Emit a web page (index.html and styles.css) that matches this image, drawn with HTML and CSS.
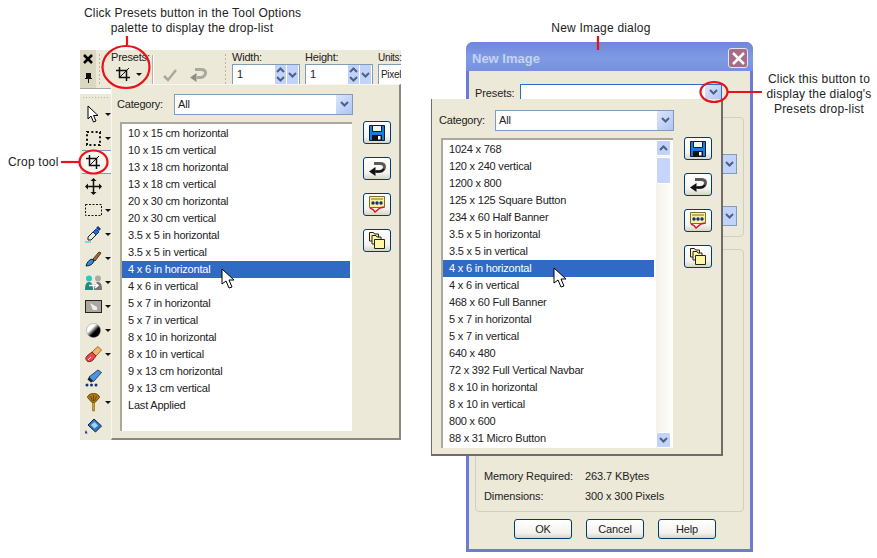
FILE: index.html
```html
<!DOCTYPE html>
<html lang="en">
<head>
    <meta charset="UTF-8">
    <title>Presets drop-list</title>
    <link rel="stylesheet" href="styles.css">
</head>
<body>

<svg class="defs" width="0" height="0">
    <symbol id="ico-save" viewBox="0 0 16 16">
        <path d="M.5.500h15v15H.5z" fill="#1a7ae0" stroke="#0a1a40"/>
        <path d="M3.500.500h9v6h-9z" fill="#f4f4ec" stroke="#0a1a40"/>
        <path d="M3 10h10v5.500H3z" fill="#111"/>
        <path d="M9 11h2.500v3.500H9z" fill="#fff"/>
    </symbol>
    <symbol id="ico-undo" viewBox="0 0 18 16">
        <path d="M6 2.500h6c3 0 4.500 1.500 4.500 3.500s-2 4.500-5 4.500H8" fill="none" stroke="#5a5a5a" stroke-width="3"/>
        <path d="M1 10.500l6.500-4.500v9z" fill="#111"/>
        <path d="M7 10.500h4.500c2 0 3.500-1 4.500-2.500" fill="none" stroke="#111" stroke-width="2"/>
    </symbol>
    <symbol id="ico-manage" viewBox="0 0 18 17">
        <path d="M1.500.500h15v11h-15z" fill="#f6efa6" stroke="#7a7420"/>
        <path d="M3 3h12" stroke="#7a7420"/>
        <circle cx="5" cy="7" r="1.700" fill="#1c2c70"/>
        <circle cx="9" cy="7" r="1.700" fill="#1c2c70"/>
        <circle cx="13" cy="7" r="1.700" fill="#1c2c70"/>
        <path d="M2 12l3 1.500 2 2.500 5-4 4-1" fill="none" stroke="#e01818" stroke-width="1.500"/>
    </symbol>
    <symbol id="ico-folders" viewBox="0 0 16 17">
        <path d="M.5.500h4l1 1.500h4v7H.5z" fill="#fff6a8" stroke="#222"/>
        <path d="M3 3.500h4l1 1.500h4v7H3z" fill="#fff6a8" stroke="#222"/>
        <path d="M5.500 7.500h10v9h-10z" fill="#fff6a8" stroke="#222"/>
    </symbol>
    <symbol id="ico-crop" viewBox="0 0 14 14">
        <path d="M3.500 0v10.500H14M0 3.500h10.500V14" fill="none" stroke="#111" stroke-width="1.500"/>
        <path d="M3 11L13 1" stroke="#111"/>
    </symbol>
    <symbol id="ico-chev" viewBox="0 0 9 7">
        <path d="M1 1l3.500 3.500L8 1" fill="none" stroke="#4d6185" stroke-width="2"/>
    </symbol>
    <symbol id="ico-chev-up" viewBox="0 0 9 7">
        <path d="M1 5l3.500-3.500L8 5" fill="none" stroke="#4d6185" stroke-width="2"/>
    </symbol>
    <symbol id="ico-cursor" viewBox="0 0 13 21">
        <path d="M1 1v15l4-3 3 7 3-1-3-7h5z" fill="#fff" stroke="#000"/>
    </symbol>
</svg>

<!-- note labels -->
<p class="note note-presets">Click Presets button in the Tool Options<br>palette to display the drop-list</p>
<p class="note note-crop">Crop tool</p>
<p class="note note-dialog">New Image dialog</p>
<p class="note note-button">Click this button to<br>display the dialog's<br>Presets drop-list</p>

<!-- left: tool options palette + tools toolbar -->
<div class="palette">
    <div class="options">
        <div class="pin-col">
            <svg width="10" height="10" viewBox="0 0 10 10"><path d="M1 1l8 8M9 1L1 9" stroke="#000" stroke-width="2.500"/></svg>
            <svg width="9" height="12" viewBox="0 0 9 12"><path d="M2 1h5v5h1v1H1V6h1zM4 7h1v4H4z" fill="#111"/></svg>
        </div>
        <div class="grip"></div>
        <div class="opt-presets">
            <span>Presets:</span>
            <div class="opt-presets-btn">
                <svg width="14" height="14"><use href="#ico-crop"/></svg>
                <i class="caret"></i>
            </div>
        </div>
        <div class="opt-sep"></div>
        <div class="opt-apply">
            <svg width="16" height="14" viewBox="0 0 16 14"><path d="M2 8l4 4 8-10" fill="none" stroke="#a9a89c" stroke-width="2.500"/></svg>
            <svg width="18" height="16" viewBox="0 0 18 16"><path d="M6 2.500h6c3 0 4.500 1.500 4.500 3.500s-2 4.500-5 4.500H8" fill="none" stroke="#a9a89c" stroke-width="3"/><path d="M1 10.500l6.500-4.500v9z" fill="#8d8d86"/></svg>
        </div>
        <div class="grip grip-2"></div>
        <div class="opt-field">
            <span>Width:</span>
            <div class="spin"><b>1</b><i class="spin-ud"><svg width="9" height="7"><use href="#ico-chev-up"/></svg><svg width="9" height="7"><use href="#ico-chev"/></svg></i><i class="spin-btn"><svg width="9" height="7"><use href="#ico-chev"/></svg></i></div>
        </div>
        <div class="opt-field">
            <span>Height:</span>
            <div class="spin"><b>1</b><i class="spin-ud"><svg width="9" height="7"><use href="#ico-chev-up"/></svg><svg width="9" height="7"><use href="#ico-chev"/></svg></i><i class="spin-btn"><svg width="9" height="7"><use href="#ico-chev"/></svg></i></div>
        </div>
        <div class="opt-field opt-units">
            <span>Units:</span>
            <div class="spin"><b>Pixel</b></div>
        </div>
    </div>

    <div class="tools">
        <div class="tools-grip"></div>
        <div class="tool"><svg width="15" height="18" viewBox="0 0 13 18"><path d="M1 1v13l3-3 2.500 6 2.500-1-2.500-5.500H11z" fill="#fff" stroke="#000"/></svg><i class="caret"></i></div>
        <div class="tool"><svg width="15" height="15" viewBox="0 0 15 15"><rect x="1" y="1" width="13" height="13" fill="none" stroke="#111" stroke-width="2" stroke-dasharray="2 2.330"/></svg><i class="caret"></i></div>
        <div class="tool tool-on"><svg width="14" height="14"><use href="#ico-crop"/></svg></div>
        <div class="tool"><svg width="17" height="17" viewBox="0 0 17 17"><path d="M8.500 1v15M1 8.500h15" stroke="#111" stroke-width="1.500"/><path d="M8.500 0l3 3h-6zM8.500 17l3-3h-6zM0 8.500l3-3v6zM17 8.500l-3-3v6z" fill="#111"/></svg></div>
        <div class="tool"><svg width="17" height="12" viewBox="0 0 17 12"><rect x=".5" y=".5" width="16" height="11" fill="#ece9d8" stroke="#111" stroke-dasharray="2 1.500"/></svg><i class="caret"></i></div>
        <div class="tool"><svg width="16" height="17" viewBox="0 0 16 17"><path d="M3 11l6-6 3 3-6 6H3z" fill="#ece9d8" stroke="#123"/><path d="M8 6l3-3 3 3-3 3z" fill="#1f6fd0" stroke="#123a88"/><path d="M11 2l2-2 3 3-2 2z" fill="#123a88"/><path d="M0 16h6" stroke="#22c8d0"/></svg><i class="caret"></i></div>
        <div class="tool"><svg width="17" height="17" viewBox="0 0 17 17"><path d="M1 16c1-4 3-6 6-7l2 2c-1 3-4 5-8 5z" fill="#2a8fd8" stroke="#123"/><path d="M8 9l6-7 2 1-6 8z" fill="#a86a30" stroke="#432"/></svg><i class="caret"></i></div>
        <div class="tool"><svg width="17" height="15" viewBox="0 0 17 15"><path d="M0 15c0-5 1-8 4-8s4 3 4 8z" fill="#1f8a80"/><circle cx="4" cy="3.500" r="3" fill="#2cc8c0"/><path d="M9 15c0-5 1-8 4-8s4 3 4 8z" fill="#777"/><circle cx="13" cy="3.500" r="3" fill="#aaa"/><path d="M4 10.500h9M10 8l3 2.500-3 2.500" fill="none" stroke="#fff" stroke-width="1.500"/></svg><i class="caret"></i></div>
        <div class="tool"><svg width="17" height="13" viewBox="0 0 17 13"><rect x=".5" y=".5" width="16" height="12" fill="#aaa89c" stroke="#222"/><path d="M5 3l7 4v3H8z" fill="#eee"/></svg><i class="caret"></i></div>
        <div class="tool"><svg width="15" height="15" viewBox="0 0 15 15"><defs><linearGradient id="gr-tone" x1="0" y1="0" x2="1" y2="1"><stop offset=".35" stop-color="#fff"/><stop offset=".6" stop-color="#000"/></linearGradient></defs><circle cx="7.500" cy="7.500" r="7" fill="url(#gr-tone)" stroke="#888" stroke-width=".5"/></svg><i class="caret"></i></div>
        <div class="tool"><svg width="17" height="17" viewBox="0 0 17 17"><path d="M7 6l6-5.500 3.500 3.500-5.500 6z" fill="#f0b860" stroke="#964"/><path d="M7 6l4 4-3 4c-2 2-5 2-6 1s-2-3 0-5z" fill="#e84848" stroke="#722"/><path d="M3 14l3-3" stroke="#fff"/></svg><i class="caret"></i></div>
        <div class="tool"><svg width="17" height="18" viewBox="0 0 17 18"><path d="M4 8l9-7 3.500 2.500-8 9z" fill="#4f94e0" stroke="#246"/><path d="M4 8l4 4.500-2 1-3.500-3z" fill="#222"/><g fill="#18307a"><circle cx="2" cy="16" r="1.500"/><circle cx="6.500" cy="16" r="1.500"/><circle cx="11" cy="16" r="1.500"/></g></svg></div>
        <div class="tool"><svg width="13" height="19" viewBox="0 0 13 19"><path d="M.5 4.500a6 4 0 0 1 12 0l-4.500 5H5z" fill="#b07a12" stroke="#6a4a08"/><path d="M3.500 3l2 5M6.500 2v6M9.500 3l-2 5" stroke="#6a4a08"/><path d="M5.500 9.500h2V18h-2z" fill="#d8a020" stroke="#6a4a08" stroke-width=".5"/></svg><i class="caret"></i></div>
        <div class="tool"><svg width="17" height="17" viewBox="0 0 17 17"><path d="M3 7l6-6 7.500 7-6 6z" fill="#2f78c8" stroke="#123"/><path d="M6 7l3.500-3 3.500 3.500-3.500 3z" fill="#a8d0f0"/><path d="M1 12l1.500 3.500h-3z" fill="#1a3a9a"/></svg></div>
    </div>

    <div class="panel panel-left">
        <div class="panel-main">
            <div class="cat-row">
                <span>Category:</span>
                <div class="select"><span>All</span><i class="drop-btn"><svg width="9" height="7"><use href="#ico-chev"/></svg></i></div>
            </div>
            <div class="list">
                <ul class="list-items">
                    <li>10 x 15 cm horizontal</li>
                    <li>10 x 15 cm vertical</li>
                    <li>13 x 18 cm horizontal</li>
                    <li>13 x 18 cm vertical</li>
                    <li>20 x 30 cm horizontal</li>
                    <li>20 x 30 cm vertical</li>
                    <li>3.5 x 5 in horizontal</li>
                    <li>3.5 x 5 in vertical</li>
                    <li class="on">4 x 6 in horizontal<svg class="cursor" width="13" height="21"><use href="#ico-cursor"/></svg></li>
                    <li>4 x 6 in vertical</li>
                    <li>5 x 7 in horizontal</li>
                    <li>5 x 7 in vertical</li>
                    <li>8 x 10 in horizontal</li>
                    <li>8 x 10 in vertical</li>
                    <li>9 x 13 cm horizontal</li>
                    <li>9 x 13 cm vertical</li>
                    <li>Last Applied</li>
                </ul>
            </div>
        </div>
        <div class="side-btns">
            <button class="xp-btn"><svg width="16" height="16"><use href="#ico-save"/></svg></button>
            <button class="xp-btn"><svg width="18" height="16"><use href="#ico-undo"/></svg></button>
            <button class="xp-btn"><svg width="18" height="17"><use href="#ico-manage"/></svg></button>
            <button class="xp-btn"><svg width="16" height="17"><use href="#ico-folders"/></svg></button>
        </div>
    </div>
</div>

<!-- right: new image dialog -->
<div class="dialog">
    <div class="dlg-title">
        <span>New Image</span>
        <div class="dlg-close"><svg width="13" height="13" viewBox="0 0 13 13"><path d="M1 1l11 11M12 1L1 12" stroke="#fff" stroke-width="2.500"/></svg></div>
    </div>
    <div class="dlg-body">
        <div class="dlg-presets">
            <span>Presets:</span>
            <div class="dlg-input"><i class="drop-btn"><svg width="9" height="7"><use href="#ico-chev"/></svg></i></div>
        </div>
        <div class="group group-top">
            <i class="stub"><svg width="9" height="7"><use href="#ico-chev"/></svg></i>
            <i class="stub"><svg width="9" height="7"><use href="#ico-chev"/></svg></i>
        </div>
        <div class="group group-info">
            <div class="info-row"><span>Memory Required:</span><span>263.7 KBytes</span></div>
            <div class="info-row"><span>Dimensions:</span><span>300 x 300 Pixels</span></div>
        </div>
        <div class="dlg-btns">
            <button class="xp-btn">OK</button>
            <button class="xp-btn">Cancel</button>
            <button class="xp-btn">Help</button>
        </div>
    </div>
</div>

<div class="panel panel-right">
    <div class="panel-main">
        <div class="cat-row">
            <span>Category:</span>
            <div class="select"><span>All</span><i class="drop-btn"><svg width="9" height="7"><use href="#ico-chev"/></svg></i></div>
        </div>
        <div class="list">
            <ul class="list-items">
                <li>1024 x 768</li>
                <li>120 x 240 vertical</li>
                <li>1200 x 800</li>
                <li>125 x 125 Square Button</li>
                <li>234 x 60 Half Banner</li>
                <li>3.5 x 5 in horizontal</li>
                <li>3.5 x 5 in vertical</li>
                <li class="on">4 x 6 in horizontal<svg class="cursor" width="13" height="21"><use href="#ico-cursor"/></svg></li>
                <li>4 x 6 in vertical</li>
                <li>468 x 60 Full Banner</li>
                <li>5 x 7 in horizontal</li>
                <li>5 x 7 in vertical</li>
                <li>640 x 480</li>
                <li>72 x 392 Full Vertical Navbar</li>
                <li>8 x 10 in horizontal</li>
                <li>8 x 10 in vertical</li>
                <li>800 x 600</li>
                <li>88 x 31 Micro Button</li>
            </ul>
            <div class="scroll">
                <i class="scroll-btn"><svg width="9" height="7"><use href="#ico-chev-up"/></svg></i>
                <i class="scroll-thumb"></i>
                <i class="scroll-btn scroll-down"><svg width="9" height="7"><use href="#ico-chev"/></svg></i>
            </div>
        </div>
    </div>
    <div class="side-btns">
        <button class="xp-btn"><svg width="16" height="16"><use href="#ico-save"/></svg></button>
        <button class="xp-btn"><svg width="18" height="16"><use href="#ico-undo"/></svg></button>
        <button class="xp-btn"><svg width="18" height="17"><use href="#ico-manage"/></svg></button>
        <button class="xp-btn"><svg width="16" height="17"><use href="#ico-folders"/></svg></button>
    </div>
</div>

<!-- red callouts over everything -->
<svg class="callouts" width="877" height="558" viewBox="0 0 877 558">
    <g fill="none" stroke="#e8121a" stroke-width="2.200">
        <ellipse cx="126" cy="67" rx="23.500" ry="21"/>
        <path d="M127 36v9"/>
        <ellipse cx="93.500" cy="162" rx="14" ry="11.500"/>
        <path d="M61 162h18"/>
        <ellipse cx="714" cy="92" rx="13.500" ry="10"/>
        <path d="M728 92h34"/>
        <path d="M598 36v14"/>
    </g>
</svg>

</body>
</html>
```

FILE: styles.css
```css
* {
    box-sizing: border-box;
}
html, body {
    margin: 0;
    padding: 0;
}
body {
    position: relative;
    width: 877px;
    height: 558px;
    overflow: hidden;
    background-color: #fff;
    font-family: "Liberation Sans", Arial, sans-serif;
    font-size: 12px;
    color: #222;
}
ul {
    list-style: none;
    margin: 0;
    padding: 0;
}
i {
    font-style: normal;
}
svg {
    display: block;
}
.defs {
    position: absolute;
}

/* notes */
.note {
    position: absolute;
    margin: 0;
    font-size: 12px;
    line-height: 15px;
    letter-spacing: .2px;
    text-align: center;
    white-space: nowrap;
}
.note-presets {
    left: 84px;
    top: 6px;
    width: 216px;
}
.note-crop {
    left: 8px;
    top: 155px;
}
.note-dialog {
    left: 551px;
    top: 21px;
    width: 100px;
}
.note-button {
    left: 765px;
    top: 72px;
    width: 108px;
}
.callouts {
    position: absolute;
    left: 0;
    top: 0;
}

/* left palette */
.palette {
    position: absolute;
    left: 80px;
    top: 50px;
    width: 321px;
    height: 390px;
    font-size: 11px;
    letter-spacing: -.2px;
}
.options {
    display: flex;
    height: 39px;
    background-color: #ece9d8;
    border-bottom: 1px solid #aca899;
}
.pin-col {
    width: 16px;
    display: flex;
    flex-direction: column;
    align-items: center;
    gap: 8px;
    padding-top: 4px;
    background-color: #dcd7c0;
}
.grip {
    width: 3px;
    height: 33px;
    margin: 3px 4px 0 2px;
    background-image: radial-gradient(#b8b5a4 1px, transparent 1px);
    background-size: 3px 4px;
}
.opt-presets {
    width: 47px;
    padding: 1px 0 0 6px;
}
.opt-presets > span {
    display: block;
    height: 13px;
    line-height: 13px;
}
.opt-presets-btn {
    display: flex;
    align-items: center;
    gap: 6px;
    margin: 3px 0 0 5px;
}
.opt-sep {
    width: 2px;
    height: 32px;
    margin-top: 5px;
    border-left: 1px solid #b5b2a2;
    border-right: 1px solid #fff;
}
.opt-apply {
    display: flex;
    align-items: center;
    gap: 11px;
    width: 70px;
    height: 38px;
    padding: 12px 0 0 8px;
}
.grip-2 {
    margin: 3px 5px 0 0;
}
.opt-field {
    width: 73px;
    padding-top: 1px;
}
.opt-field > span {
    display: block;
    height: 13px;
    line-height: 13px;
}
.opt-units {
    width: 23px;
    font-size: 10px;
    letter-spacing: -.3px;
}
.spin {
    display: flex;
    align-items: flex-start;
    width: 68px;
    height: 22px;
    overflow: hidden;
    background-color: #fff;
    border: 1px solid #7f9db9;
}
.opt-units .spin {
    width: 23px;
    border-right: 0;
}
.spin b {
    flex: 1;
    padding: 3px 0 0 4px;
    font-weight: normal;
    line-height: 13px;
}
.opt-units .spin b {
    padding-left: 2px;
}
.spin-ud,
.spin-btn {
    width: 11px;
    height: 20px;
    background-color: #c1d3fb;
    display: flex;
    flex-direction: column;
    align-items: center;
    justify-content: center;
}
.spin-ud {
    gap: 2px;
}
.spin-btn {
    margin-left: 1px;
    margin-right: 1px;
}

.tools {
    height: 346px;
    margin-top: 5px;
    width: 31px;
    background-color: #ece9d8;
}
.tools-grip {
    height: 8px;
    margin: 0 2px;
    background-image: radial-gradient(#b8b5a4 1px, transparent 1px);
    background-size: 3px 3px;
    background-repeat: repeat-x;
    background-position: 0 2px;
}
.tool {
    position: relative;
    height: 24px;
    display: flex;
    align-items: center;
    justify-content: center;
    padding-right: 5px;
}
.tool-on {
    background-color: #f7f6ef;
    border: 1px solid #7f9db9;
    border-width: 1px 0;
    margin-left: 2px;
    padding-right: 7px;
}
.caret {
    display: block;
    width: 0;
    height: 0;
    border: 3px solid transparent;
    border-top: 3px solid #111;
    border-bottom: 0;
}
.tool .caret {
    position: absolute;
    right: 0;
    top: 11px;
}

/* presets drop-list panels */
.panel {
    position: absolute;
    display: flex;
    background-color: #ece9d8;
    font-size: 11px;
    letter-spacing: -.2px;
}
.panel-left {
    left: 31px;
    top: 34px;
    width: 290px;
    height: 356px;
    padding: 0 9px 7px 6px;
    border-right: 2px solid #8a887c;
    border-bottom: 2px solid #8a887c;
    border-top: 1px solid #f7f6ef;
    border-left: 1px solid #f7f6ef;
}
.panel-right {
    left: 431px;
    top: 99px;
    width: 292px;
    height: 357px;
    padding: 0 8px 6px 9px;
    border: 1px solid #6f6e66;
    border-width: 0 2px 2px 1px;
}
.panel-main {
    width: 233px;
    display: flex;
    flex-direction: column;
}
.cat-row {
    display: flex;
    align-items: center;
    justify-content: space-between;
    width: 236px;
    height: 22px;
    margin-top: 10px;
}
.panel-left .cat-row {
    margin: 8px 0 0 -1px;
}
.panel-right .cat-row {
    width: 235px;
    margin-left: -2px;
}
.select {
    display: flex;
    align-items: center;
    justify-content: space-between;
    width: 179px;
    height: 21px;
    padding-left: 3px;
    background-color: #fff;
    border: 1px solid #7f9db9;
}
.drop-btn {
    width: 16px;
    height: 19px;
    display: flex;
    align-items: center;
    justify-content: center;
    background: linear-gradient(135deg, #dbe5fc, #afc4f4);
}
.list {
    display: flex;
    flex: 1;
    margin-top: 7px;
    background-color: #fff;
    border-top: 2px solid #aca899;
    border-left: 2px solid #aca899;
    overflow: hidden;
}
.panel-right .list {
    width: 232px;
}
.panel-left .list {
    margin-left: 2px;
    width: 232px;
}
.list-items {
    flex: 1;
    padding-top: 1px;
}
.list-items li {
    position: relative;
    height: 17px;
    line-height: 17px;
    padding-left: 6px;
    color: #222;
    white-space: nowrap;
}
.list-items li.on {
    background-color: #316ac5;
    color: #fff;
    margin-right: 2px;
}
.cursor {
    position: absolute;
    left: 99px;
    top: 7px;
    z-index: 2;
}
.panel-right .cursor {
    left: 110px;
}
.scroll {
    width: 17px;
    display: flex;
    flex-direction: column;
    background: linear-gradient(90deg, #f3f1e7, #fff);
}
.scroll-btn,
.scroll-thumb {
    display: flex;
    align-items: center;
    justify-content: center;
    width: 15px;
    background-color: #c1d3fb;
    border: 1px solid #fff;
    border-radius: 2px;
}
.scroll-btn {
    height: 16px;
}
.scroll-thumb {
    height: 27px;
    margin-top: 1px;
    background-color: #c5d5fb;
}
.scroll-down {
    margin-top: auto;
}
.side-btns {
    display: flex;
    flex-direction: column;
    gap: 13px;
}
.panel-left .side-btns {
    margin: 36px 0 0 12px;
}
.panel-right .side-btns {
    margin: 38px 0 0 10px;
}
.xp-btn {
    display: flex;
    align-items: center;
    justify-content: center;
    width: 28px;
    height: 23px;
    padding: 0;
    font-family: inherit;
    font-size: 11px;
    letter-spacing: inherit;
    color: #222;
    background: linear-gradient(#fff, #f4f3ee 70%, #d9d5c5);
    border: 1px solid #003c74;
    border-radius: 3px;
}

/* new image dialog */
.dialog {
    position: absolute;
    left: 466px;
    top: 42px;
    width: 287px;
    height: 510px;
    display: flex;
    flex-direction: column;
    font-size: 11px;
    letter-spacing: -.1px;
    background-color: #6c7bd8;
    border-radius: 7px 7px 0 0;
    padding: 0 3px 3px;
}
.dlg-title {
    display: flex;
    align-items: center;
    justify-content: space-between;
    height: 29px;
    margin: 0 -3px;
    padding: 3px 5px 0 6px;
    background: linear-gradient(#6f86dc, #7f9be4 55%, #7690e0);
    border-radius: 7px 7px 0 0;
    font-size: 13px;
    letter-spacing: 0;
    font-weight: bold;
    color: #c4d2f3;
}
.dlg-close {
    width: 20px;
    height: 20px;
    display: flex;
    align-items: center;
    justify-content: center;
    background-color: #a76d86;
    border: 1px solid #dfe4f5;
    border-radius: 3px;
}
.dlg-body {
    flex: 1;
    display: flex;
    flex-direction: column;
    padding: 13px 6px 10px 6px;
    background-color: #ece9d8;
}
.dlg-presets {
    display: flex;
    align-items: center;
    gap: 5px;
    height: 17px;
    padding-right: 22px;
}
.dlg-input {
    flex: 1;
    height: 17px;
    display: flex;
    justify-content: flex-end;
    background-color: #fff;
    border: 1px solid #316ac5;
}
.dlg-input .drop-btn {
    height: 15px;
}
.group {
    border: 1px solid #d0d0bf;
    border-radius: 4px;
}
.group-top {
    height: 120px;
    margin-top: 16px;
    display: flex;
    flex-direction: column;
    align-items: flex-end;
    gap: 32px;
    padding: 36px 6px 0 0;
}
.stub {
    width: 14px;
    height: 20px;
    display: flex;
    align-items: center;
    justify-content: center;
    background-color: #c1d3fb;
    border: 1px solid #7f9db9;
    border-left: 0;
}
.group-info {
    height: 263px;
    margin-top: 12px;
    display: flex;
    flex-direction: column;
    justify-content: flex-end;
    gap: 6px;
    padding: 0 0 8px 8px;
}
.info-row {
    display: flex;
    line-height: 14px;
}
.info-row span:first-child {
    width: 101px;
}
.dlg-btns {
    display: flex;
    justify-content: flex-end;
    gap: 14px;
    margin-top: 7px;
    padding-right: 28px;
}
.dlg-btns .xp-btn {
    width: 58px;
    height: 20px;
}
```
